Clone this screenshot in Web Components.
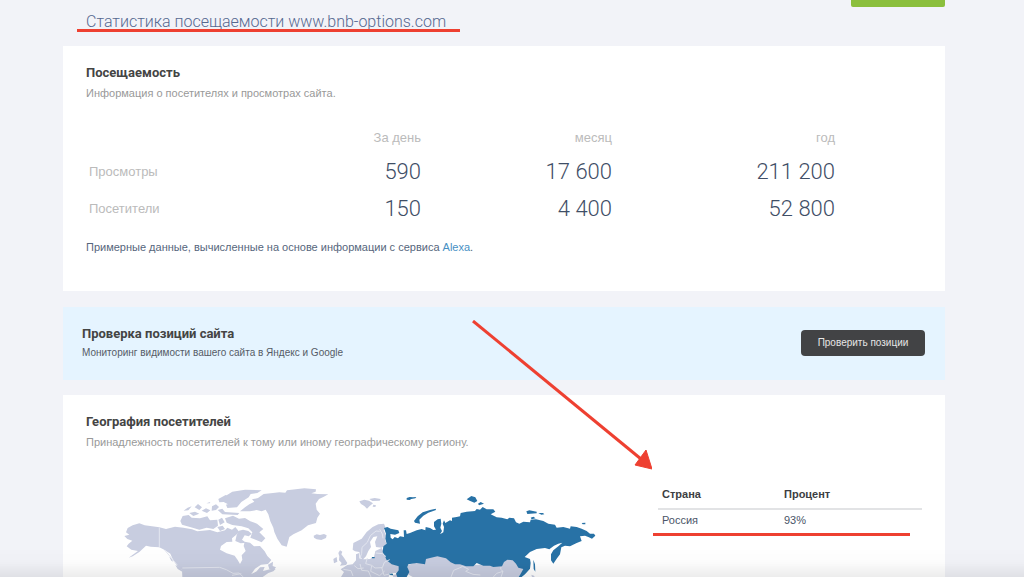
<!DOCTYPE html>
<html lang="ru">
<head>
<meta charset="utf-8">
<title>Статистика посещаемости www.bnb-options.com</title>
<style>
html, body { margin: 0; }
body { background: #f2f3f8; font-family: "Liberation Sans", Arial, sans-serif; color: #4a5568; }
</style>
</head>
<body>
<stats-page></stats-page>
<script>
function define(name, html) {
  const t = document.createElement('template');
  t.innerHTML = html;
  customElements.define(name, class extends HTMLElement {
    constructor() {
      super();
      this.attachShadow({ mode: 'open' }).append(t.content.cloneNode(true));
    }
  });
}

define('page-title', `
<style>
:host { display: flex; justify-content: space-between; align-items: flex-start; height: 46px; }
h1 { position: relative; margin: 12px 0 0 23px; font-family: Roboto, sans-serif; font-size: 16px; line-height: 20px; font-weight: 300; color: #566890; }
h1::after { content: ""; position: absolute; left: -9px; right: -14px; top: 17px; height: 3px; background: #ee4031; }
button { width: 94px; height: 7px; padding: 0; border: 0; border-radius: 0 0 2px 2px; background: #8bbf3d; }
</style>
<h1><slot></slot></h1>
<button type="button" aria-label="Анализ"></button>`);

define('info-card', `
<style>
:host { display: block; box-sizing: border-box; background: #fff; padding: 18px 23px 0; }
h2 { margin: 0; font-family: Roboto, sans-serif; font-size: 13px; line-height: 18px; color: #444; }
p { margin: 3px 0 0; font-size: 11px; line-height: 16px; color: #999; }
</style>
<h2><slot name="title"></slot></h2>
<p><slot name="note"></slot></p>
<slot></slot>`);

define('traffic-table', `
<style>
:host { display: block; margin-top: 26px; }
table { width: 752px; max-width: 100%; border-collapse: collapse; table-layout: fixed; }
th, td { padding: 0 3px; text-align: right; font-weight: 400; }
th { font-size: 13px; line-height: 22px; color: #bbb; }
thead th { padding-bottom: 4px; }
tbody th { text-align: left; }
td { height: 37px; font-family: Roboto, sans-serif; font-weight: 300; font-size: 22px; line-height: 37px; color: #3f4e66; }
.l { width: 154px } .d { width: 172px } .m { width: 185px }
p { margin: 12px 0 0; font-size: 11px; line-height: 16px; color: #56667c; }
a { color: #4790c4; text-decoration: none; }
</style>
<table>
<thead><tr><th class="l"></th><th class="d" scope="col">За день</th><th class="m" scope="col">месяц</th><th scope="col">год</th></tr></thead>
<tbody>
<tr><th scope="row">Просмотры</th><td>590</td><td>17 600</td><td>211 200</td></tr>
<tr><th scope="row">Посетители</th><td>150</td><td>4 400</td><td>52 800</td></tr>
</tbody>
</table>
<p>Примерные данные, вычисленные на основе информации с сервиса <a href="#alexa">Alexa</a>.</p>`);

define('promo-bar', `
<style>
:host { display: flex; justify-content: space-between; align-items: center; box-sizing: border-box; height: 73px; padding: 0 20px 2px 19px; background: #e5f4ff; }
h2 { margin: 0; font-family: Roboto, sans-serif; font-size: 13px; line-height: 18px; color: #444; }
p { margin: 2px 0 0; font-size: 10px; line-height: 16px; color: #555b66; }
button { width: 124px; height: 26px; padding: 0; border: 0; border-radius: 4px; background: #424345; color: #e6e6e6; font: 10px/26px "Liberation Sans", Arial, sans-serif; }
</style>
<div><h2>Проверка позиций сайта</h2><p>Мониторинг видимости вашего сайта в Яндекс и Google</p></div>
<button type="button">Проверить позиции</button>`);

define('world-map', `
<style>
:host { display: block; }
svg { display: block; width: 100%; height: 100px; }
.land { fill: #c8cde0; }
.ru { fill: #2872a6; }
.edge { fill: none; stroke: #e3e6f0; stroke-width: 3; }
</style>
<svg viewBox="-72 0 1716 300" preserveAspectRatio="xMinYMin slice" role="img" aria-label="Карта мира">
<g class="land">
<path d="M53 153L68 145 88 139 104 145 148 151 168 156 195 149 220 152 246 157 262 163 300 159 322 166 345 160 352 152 366 158 376 150 388 165 377 175 366 184 367 194 350 195 333 207 330 218 350 229 374 236 383 249 390 261 397 248 395 235 407 222 401 207 404 194 420 197 432 208 450 207 464 223 472 237 484 249 474 261 453 263 435 275 424 291 440 283 450 271 464 270 459 282 480 277 497 276 490 283 475 288 458 300H217L216 278 202 267 188 246 181 230 164 219 148 211 122 209 108 206 88 225 68 238 56 242 84 222 64 218 50 208 56 200 67 191 52 186 43 177 58 173 48 166z"/>
<path d="M178 240l5 2 7 12-6-3zM196 264l18 9 4 12-15-9zM474 263l15-9-1 13 10 4-8 10-12-5z"/>
<path d="M211 132L218 117 236 114 245 122 270 124 292 118 300 130 322 128 324 146 310 156 290 152 268 158 240 150 216 143zM221 101L233 92 245 88 235 100zM238 108L255 104 268 110 250 117zM254 91L264 81 276 91 268 99zM289 79L301 75 299 79zM275 101L288 94 301 100 291 108zM306 88L318 82 327 90 318 99 305 101zM323 99L337 95 345 105 388 108 383 114 337 112zM325 128L336 122 344 136 330 144zM322 150L338 146 345 156 330 162zM325 66L347 54 367 62 371 75 357 83 341 75 328 76zM345 58L367 44 405 38 455 40 442 48 422 51 416 61 394 75 381 91 352 93 348 83 368 76 360 59zM345 124L369 116 387 125 405 123 421 133 441 140 460 156 448 166 466 184 455 196 433 187 421 182 427 166 415 154 395 148 367 144 350 137zM380 174L387 161 399 158 415 162 425 170 416 178 404 175 396 188 408 197 392 199 376 192z"/>
<path d="M390 103L405 91 418 82 433 74 426 67 444 63 461 51 489 48 508 46 526 47 531 40 583 34 618 37 617 44 604 49 622 51 655 52 640 60 627 66 617 80 620 98 630 110 622 122 618 138 594 145 575 160 550 172 538 180 530 209 515 205 502 185 493 165 490 152 481 133 475 112 467 98 455 103 440 99 420 103z"/>
<path d="M611 176l9-4 10 2 12-3 8 4-2 8-14 6-14-2-8-5zM748 73l15-5 14 3 12 8-10 8-8 8-8-8-10-6zM778 66l16-3 18 3-3 5-22 1zM790 83l8 2-2 5-8-1z"/>
</g>
<g class="land" transform="translate(480)">
<path d="M248 218L250 198 275 185 290 165 308 150 325 142 342 140 346 150 341 160 348 175 345 188 350 202 335 212 318 210 315 195 322 178 310 180 300 195 303 210 295 222 288 238 278 248 272 240 268 225 255 223z"/>
<path d="M205 228L210 220 217 224 214 232 222 242 232 258 228 264 210 266 215 258 207 250 208 238zM190 246L200 240 202 254 192 259z"/>
<path d="M213 300L222 285 212 277 232 264 248 262 258 250 258 232 268 228 268 244 282 247 300 246 312 240 316 222 335 213 342 225 348 240 354 252 370 262 388 268 386 285 378 288 360 288 356 300zM368 294L382 292 384 300H370z"/>
</g>
<path class="land" transform="translate(960)" d="M-52 300L-66 292 -68 265 -40 256 -20 256 -15 246 0 238 22 234 48 240 62 252 90 258 108 264 130 264 180 262 216 264 222 251 232 246 250 248 284 274 266 300zM304 293L312 296 314 300H306z"/>
<path class="ru" transform="translate(960)" d="M-138 153L-128 150 -118 155 -95 160 -92 168 -105 173 -119 171 -118 182 -112 187 -106 180 -96 184 -90 178 -78 180 -79 160 -72 160 -70 171 -60 168 -40 160 -25 156 -14 160 -13 150 0 153 10 159 18 158 12 148 12 135 23 127 32 125 34 140 31 152 36 162 30 172 40 166 42 150 38 140 42 130 46 138 60 130 66 132 66 122 80 120 90 118 92 108 110 104 135 102 140 96 150 98 158 90 170 97 190 97 196 104 182 112 200 121 215 122 232 127 238 122 252 124 258 136 268 140 280 134 300 136 302 128 318 127 340 132 355 140 375 143 380 152 400 150 420 155 422 148 440 150 455 155 470 162 480 170 492 170 496 176 486 185 475 180 465 176 450 178 455 192 440 198 420 208 405 206 394 211 390 232 380 245 370 260 363 250 363 232 370 220 385 208 397 197 385 200 372 206 358 217 345 213 320 216 300 225 284 240 300 246 302 258 300 275 285 292 275 300H266L272 290 280 276 265 272 258 260 248 250 232 248 222 255 216 268 190 270 180 266 160 266 140 258 130 268 108 268 90 262 75 262 62 256 48 244 22 238 0 243 -12 246 -15 262 -40 258 -65 262 -68 270 -62 285 -70 300H-98L-102 290 -94 280 -94 268 -115 262 -130 250 -135 238 -142 225 -140 208 -130 200 -134 185 -132 170z"/>
<g class="ru">
<path d="M786 240h8v4h-9zM837 289l12 1 0 5-10-1zM912 132L923 118 938 106 960 99 977 95 978 99 955 107 940 116 928 128 930 140 915 137zM890 63l9-3 10 1 10-1-3 4-12 2-5 3-9-1zM1070 67l14-10 12 4 6 11-9 5-14-6zM1104 80l8-5 10 5-15 5zM1249 103l9-3 22 4 0 5-28 2zM1262 122l8-3 7 5-12 3zM1285 108l14 0 4 4-9 1zM1415 138l11-1 0 5-8 0zM1270 248l5 14 1 22-5-8z"/>
</g>
<g class="edge">
<path d="M148 151v60M164 219l38 45M217 273l112-2 20 7 20 11 18-1 13 12M366 295l28-5"/>
<path d="M750 245l5-16 1-18 16-15 9-20 17-14 11 1M809 157l8 14 2 13M750 261l5 19 20 2 8 18M733 266l11 9 17-2M772 243l-5 17 18 5 10 8 22-1 6-16 16-8M785 266l-3 17 27 13 15-14M815 271l7 24 20-5M700 277l23 4 6 16M797 228l21 2 10 9"/>
<path d="M1023 300l8-20 17-7 10-5 18 9-9 6 22 9 22 2M1150 300l10-11 19-6-7-6 1-7M1179 283l-6 17"/>
</g>
</svg>`);

define('country-table', `
<style>
:host { display: block; position: relative; }
:host::after { content: ""; position: absolute; left: -5px; right: 12px; top: 49px; height: 3px; background: #ee4031; }
table { width: 100%; border-collapse: collapse; font-size: 11px; line-height: 16px; }
th, td { padding: 2px 4px 6px; text-align: left; }
th { color: #3c3e42; border-bottom: 2px solid #e2e3e5; }
td { padding: 2px 4px; }
th:first-child { width: 114px; }
</style>
<table>
<thead><tr><th scope="col">Страна</th><th scope="col">Процент</th></tr></thead>
<tbody><tr><td>Россия</td><td>93%</td></tr></tbody>
</table>`);

define('pointer-arrow', `
<style>
:host { position: absolute; left: 409px; top: -75px; pointer-events: none; }
svg { display: block; }
</style>
<svg width="180" height="150" viewBox="0 0 180 150" aria-hidden="true">
<path d="M1 1L169 139" stroke="#ee4031" stroke-width="3"/>
<path d="M180 149L163 145 174 130z" fill="#ee4031" stroke="#ee4031"/>
</svg>`);

define('stats-page', `
<style>
:host { display: flex; flex-direction: column; min-height: 100vh; box-sizing: border-box; padding: 0 79px 0 63px; }
.traffic { min-height: 245px; }
promo-bar { margin: 16px 0 15px; }
.geo { position: relative; flex: 1; }
.row { display: grid; grid-template-columns: 1fr 264px; margin-top: 27px; }
country-table { margin-top: 7px; }
.shade { position: fixed; inset: auto 0 0; height: 30px; pointer-events: none; background: linear-gradient(#0000, #00000003 50%, #00000012); }
</style>
<page-title>Статистика посещаемости www.bnb-options.com</page-title>
<info-card class="traffic">
<span slot="title">Посещаемость</span><span slot="note">Информация о посетителях и просмотрах сайта.</span>
<traffic-table></traffic-table>
</info-card>
<promo-bar></promo-bar>
<info-card class="geo">
<span slot="title">География посетителей</span><span slot="note">Принадлежность посетителей к тому или иному географическому региону.</span>
<div class="row"><world-map></world-map><country-table></country-table></div>
<pointer-arrow></pointer-arrow>
</info-card>
<div class="shade"></div>`);
</script>
</body>
</html>
